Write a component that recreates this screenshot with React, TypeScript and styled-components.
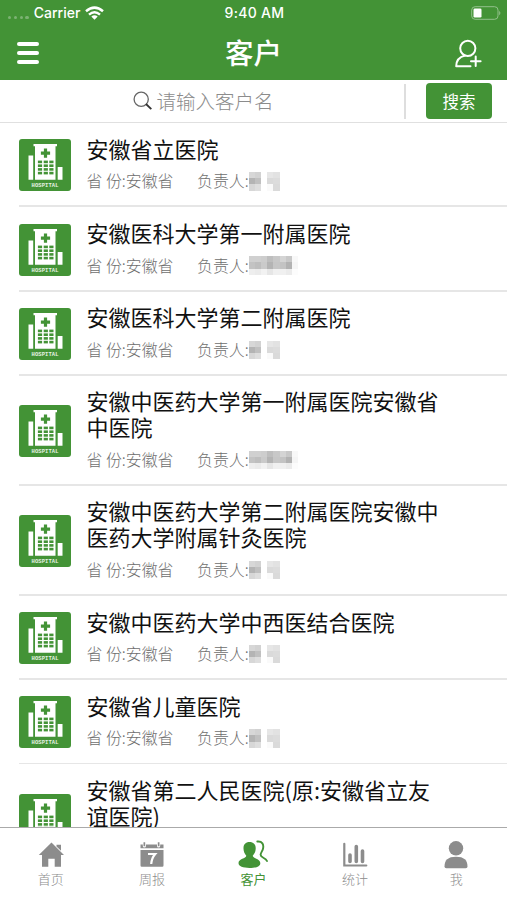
import React from "react";
import styled, { createGlobalStyle } from "styled-components";

const GREEN = "#439336";

const GlobalStyle = createGlobalStyle`
  * { box-sizing: border-box; }
  body {
    margin: 0;
    background: #fff;
    font-family: "Noto Sans CJK SC", "Noto Sans", sans-serif;
  }
`;

const Screen = styled.div`
  width: 507px;
  height: 900px;
  display: flex;
  flex-direction: column;
  overflow: hidden;
  background: #fff;
`;

const StatusBar = styled.div`
  height: 26px;
  flex: none;
  display: grid;
  grid-template-columns: 1fr auto 1fr;
  align-items: center;
  padding: 0 6px 0 8px;
  background: ${GREEN};
  color: #fff;
  font: 500 14px/26px Inter, sans-serif;
`;

const Carrier = styled.div`
  display: flex;
  align-items: center;
  gap: 5px;
`;

const Clock = styled.span`
  letter-spacing: 0.3px;
`;

const Dots = styled.span`
  display: flex;
  gap: 2.4px;
  padding-top: 8px;
  i {
    width: 3.4px;
    height: 3px;
    border-radius: 2px;
    background: #7db274;
  }
`;

const StatusRight = styled.div`
  display: flex;
  justify-content: flex-end;
`;

const NavBar = styled.header`
  height: 54px;
  flex: none;
  display: grid;
  grid-template-columns: 1fr auto 1fr;
  align-items: center;
  padding: 0 17px;
  background: ${GREEN};
  color: #fff;
`;

const NavTitle = styled.h1`
  margin: 0;
  font-size: 28.5px;
  font-weight: 500;
  line-height: 50px;
  padding-bottom: 3px;
`;

const MenuButton = styled.button`
  width: 22px;
  height: 22px;
  padding: 0;
  border: 0;
  background: none;
  display: flex;
  flex-direction: column;
  justify-content: space-between;
  i {
    width: 22px;
    height: 4px;
    border-radius: 2px;
    background: #fff;
  }
`;

const AddButton = styled.button`
  justify-self: end;
  margin-right: 8px;
  padding: 1px 0 0;
  border: 0;
  background: none;
  display: flex;
`;

const SearchBar = styled.div`
  height: 43px;
  flex: none;
  display: flex;
  align-items: center;
  padding-right: 15px;
  border-bottom: 1.5px solid #e0e0e0;
`;

const SearchField = styled.div`
  width: 406px;
  height: 35px;
  display: flex;
  align-items: center;
  justify-content: center;
  gap: 3px;
  padding-left: 3px;
  border-right: 2px solid #dedede;
  color: #8c8c8c;
  font-size: 19.5px;
  font-weight: 300;
  line-height: 33px;
  span { padding-bottom: 2px; }
`;

const SearchButton = styled.button`
  width: 66px;
  height: 36px;
  margin-left: auto;
  padding: 0 0 1px;
  border: 0;
  border-radius: 4px;
  background: ${GREEN};
  color: #fff;
  font: 400 16.5px/34px "Noto Sans CJK SC", sans-serif;
`;

const List = styled.main`
  flex: 1;
  min-height: 0;
  overflow: hidden;
`;

const Row = styled.article`
  display: grid;
  grid-template-columns: 52px 355px;
  column-gap: 15.5px;
  align-items: center;
  margin-left: 19px;
  & > svg { margin-top: 2px; }
`;

const RowBody = styled.div`
  padding: 12.6px 0 14.2px;
`;

const Name = styled.h2`
  margin: 0;
  color: #111;
  font-size: 22px;
  font-weight: 400;
  line-height: 25.8px;
`;

const Meta = styled.div`
  display: flex;
  align-items: center;
  height: 20px;
  margin-top: 9.9px;
  color: #6e6e6e;
  font-size: 15.9px;
  font-weight: 300;
  line-height: 20px;
  white-space: nowrap;
`;

const Province = styled.span`
  width: 110.5px;
`;

const Rule = styled.div`
  grid-column: 1 / -1;
  height: 1.8px;
  width: 488px;
  background: #e6e6e6;
`;

const Mosaic = styled.span`
  display: grid;
  grid-template-columns: repeat(8, 6.2px);
  grid-auto-rows: 6.2px;
`;

const Cell = styled.i<{ $shade: number }>`
  background: rgb(${(p) => `${p.$shade}, ${p.$shade}, ${p.$shade}`});
`;

const TabBar = styled.nav`
  height: 73px;
  flex: none;
  display: grid;
  grid-template-columns: repeat(5, 1fr);
  border-top: 1.5px solid #aaa;
  background: #fff;
`;

const Tab = styled.div<{ $active?: boolean }>`
  display: flex;
  flex-direction: column;
  align-items: center;
  padding-top: 12px;
  color: ${(p) => (p.$active ? GREEN : "#8c8c8c")};
  font-size: 13px;
  font-weight: ${(p) => (p.$active ? 400 : 300)};
  line-height: 20px;
`;

const TabIcon = styled.span`
  height: 29px;
  display: flex;
  align-items: center;
`;

const Wifi = () => (
  <svg width="19" height="14" viewBox="0 0 19 14" fill="none" stroke="#fff" strokeWidth="2.5">
    <path d="M1 5.2Q9.5-2 18 5.2M4 8.6Q9.5 4 15 8.6" />
    <path d="M6.3 10.5Q9.5 8 12.7 10.5L9.5 13.8Z" fill="#fff" stroke="none" />
  </svg>
);

const Battery = () => (
  <svg width="30" height="14" viewBox="0 0 30 14">
    <rect x=".7" y=".7" width="26.3" height="12.6" rx="3.4" fill="none" stroke="#93c08c" strokeWidth="1" />
    <rect x="2.5" y="2.500" width="8" height="9" rx="1.3" fill="#fff" />
    <path d="M28.2 4.7q2.4 2.3 0 4.6z" fill="#93c08c" />
  </svg>
);

const AddUser = () => (
  <svg width="28" height="30" viewBox="0 0 28 30" fill="none" stroke="#fff" strokeWidth="2" strokeLinecap="round" strokeLinejoin="round">
    <circle cx="13.8" cy="9.3" r="7.6" />
    <path d="M11 16.500C5 18 2.200 21.500 2.200 27.300H16.500M21.700 17.500v9.400M17 22.200h9.600" />
  </svg>
);

const Magnifier = () => (
  <svg width="20" height="20" viewBox="0 0 20 20" fill="none">
    <circle cx="8.2" cy="8.2" r="7.1" stroke="#666" strokeWidth="1.3" />
    <path d="M13 13l5.3 5.2" stroke="#333" strokeWidth="1.8" />
  </svg>
);

const HospitalIcon = () => (
  <svg width="52" height="52" viewBox="0 0 52 52">
    <rect width="52" height="52" rx="3" fill={GREEN} />
    <path fill="#fff" d="M14.5 5h23.500v2.200h-1.500v33.500h-20.500v-33.500h-1.500zM9.500 16.500h4.700v24.200H9.500zM38.700 28h4.800v12.700h-4.800z" />
    <path fill={GREEN} d="M24.900 9.500h3.200v3h3v3.200h-3v3.100h-3.200v-3.100h-3v-3.200h3z" />
    {[21.6, 25.4, 29.1, 32.8].map((y) =>
      [18.9, 24.7, 30.3].map((x) => <rect key={`${x}-${y}`} x={x} y={y} width="4.200" height="2.6" fill={GREEN} />)
    )}
    <text x="26" y="47.800" fill="#e4f1e2" textAnchor="middle" fontFamily="Liberation Mono, monospace" fontWeight="700" fontSize="5.500" textLength="27">HOSPITAL</text>
  </svg>
);

const Home = () => (
  <svg width="26" height="26" viewBox="0 0 26 26" fill="currentColor">
    <path d="M13.500 .5L.8 13H4v11.700h6.300v-8h6.400v8H23V13h3zM18.500 2.800h4.500v6L18.500 4.500z" />
  </svg>
);

const Calendar = () => (
  <svg width="26" height="26" viewBox="0 0 26 26" fill="currentColor">
    <path d="M1.500 2.500h2.300V4a1.600 1.600 0 0 0 3.200 0V2.500h11V4a1.600 1.600 0 0 0 3.200 0V2.500h3.300v3.800h-23zM4.500.3h1.700v4H4.500zM18.800.3h1.700v4h-1.700zM1.500 8h23v15.500a1.200 1.200 0 0 1-1.200 1.200H2.700a1.200 1.200 0 0 1-1.200-1.200z" />
    <path d="M9 12h7.200Q12.700 16 12.200 22" fill="none" stroke="#fff" strokeWidth="2.200" />
  </svg>
);

const Clients = () => (
  <svg width="30" height="29" viewBox="0 0 30 29">
    <path fill="currentColor" d="M11.500 2C7.500 2 5.300 4.500 5.500 8.800c.1 3 1.200 5.300 2.800 7-.3 2.800-7.700 3-7.800 7.200C.4 26.500 5 28 11.500 28s11-1.500 10.800-5c-.2-4.200-7.300-4.400-7.600-7.200 1.700-1.700 2.900-4 3-7C17.900 4.500 15.500 2 11.500 2z" />
    <path fill="none" stroke="currentColor" strokeWidth="1.900" strokeLinecap="round" d="M19.300 1.500c5-.5 6.700 3 5.700 7.200-.6 2.500-2.200 3.800-2.400 6-.2 3 5 2.800 6.400 6.300" />
  </svg>
);

const Chart = () => (
  <svg width="26" height="26" viewBox="0 0 26 26" fill="none" stroke="currentColor" strokeLinecap="round">
    <path d="M2.300 1.800V23.500H24.300" strokeWidth="2.200" />
    <path d="M8 13v6.500M14.300 4.500v15M20.500 9v10.500" strokeWidth="3.600" />
  </svg>
);

const Person = () => (
  <svg width="26" height="28" viewBox="0 0 26 28" fill="currentColor">
    <circle cx="13" cy="7.300" r="7.200" />
    <path d="M1.500 25.500c0-6.500 3.500-9.800 11.500-9.800s11.500 3.300 11.500 9.800q0 1.800-1.800 1.800H3.300q-1.800 0-1.800-1.800z" />
  </svg>
);

const SHORT = [
  [215, 210, 255, 230, 226, 255, 255, 255],
  [180, 192, 255, 218, 220, 255, 255, 255],
  [215, 222, 255, 250, 218, 255, 255, 255],
];
const LONG = [
  [208, 208, 205, 190, 200, 212, 200, 248],
  [195, 190, 202, 180, 198, 195, 178, 245],
  [238, 235, 242, 230, 240, 240, 235, 252],
];

const hospitals = [
  { name: "安徽省立医院", mask: SHORT },
  { name: "安徽医科大学第一附属医院", mask: LONG },
  { name: "安徽医科大学第二附属医院", mask: SHORT },
  { name: "安徽中医药大学第一附属医院安徽省中医院", mask: LONG },
  { name: "安徽中医药大学第二附属医院安徽中医药大学附属针灸医院", mask: SHORT },
  { name: "安徽中医药大学中西医结合医院", mask: SHORT },
  { name: "安徽省儿童医院", mask: SHORT },
  { name: "安徽省第二人民医院(原:安徽省立友谊医院)", mask: SHORT },
];

const tabs = [
  { label: "首页", icon: <Home /> },
  { label: "周报", icon: <Calendar /> },
  { label: "客户", icon: <Clients />, active: true },
  { label: "统计", icon: <Chart /> },
  { label: "我", icon: <Person /> },
];

export default function App() {
  return (
    <Screen>
      <GlobalStyle />
      <StatusBar>
        <Carrier>
          <Dots><i /><i /><i /><i /></Dots>
          <span>Carrier</span>
          <Wifi />
        </Carrier>
        <Clock>9:40 AM</Clock>
        <StatusRight><Battery /></StatusRight>
      </StatusBar>
      <NavBar>
        <MenuButton aria-label="菜单"><i /><i /><i /></MenuButton>
        <NavTitle>客户</NavTitle>
        <AddButton aria-label="添加客户"><AddUser /></AddButton>
      </NavBar>
      <SearchBar>
        <SearchField><Magnifier /><span>请输入客户名</span></SearchField>
        <SearchButton>搜索</SearchButton>
      </SearchBar>
      <List>
        {hospitals.map((h) => (
          <Row key={h.name}>
            <HospitalIcon />
            <RowBody>
              <Name>{h.name}</Name>
              <Meta>
                <Province>省 份:安徽省</Province>
                <span>负责人:</span>
                <Mosaic>
                  {h.mask.flat().map((shade, i) => <Cell key={i} $shade={shade} />)}
                </Mosaic>
              </Meta>
            </RowBody>
            <Rule />
          </Row>
        ))}
      </List>
      <TabBar>
        {tabs.map((t) => (
          <Tab key={t.label} $active={t.active}>
            <TabIcon>{t.icon}</TabIcon>
            <span>{t.label}</span>
          </Tab>
        ))}
      </TabBar>
    </Screen>
  );
}
